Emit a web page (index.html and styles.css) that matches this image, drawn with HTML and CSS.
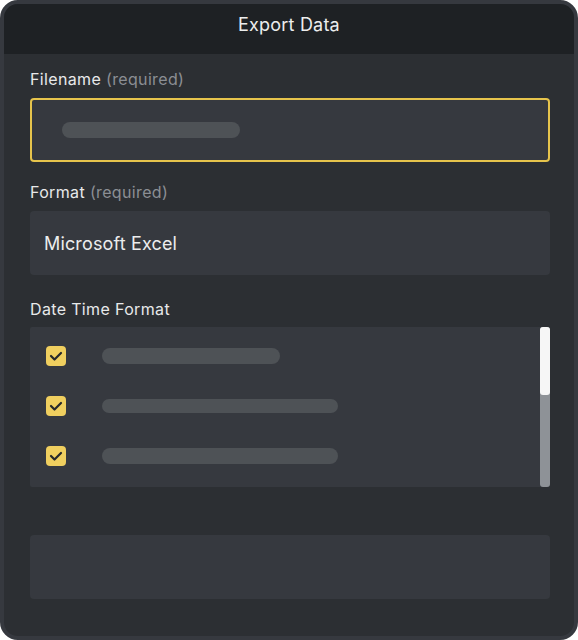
FILE: index.html
```html
<!DOCTYPE html>
<html lang="en">
<head>
<meta charset="utf-8">
<title>Export Data</title>
<link rel="stylesheet" href="styles.css">
</head>
<body>
<div class="frame">
  <div class="header">Export Data</div>
  <div class="content">
    <div class="label label-first">Filename <span class="hint">(required)</span></div>
    <div class="input input-focus"><span class="ph ph-input"></span></div>

    <div class="label">Format <span class="hint">(required)</span></div>
    <div class="input input-value">Microsoft Excel</div>

    <div class="label label-list">Date Time Format</div>
    <div class="list">
      <div class="rows">
        <div class="row">
          <span class="check"><svg viewBox="0 0 20 20" width="20" height="20"><path d="M5 10 L8.5 13.5 L15 7" fill="none" stroke="#25282c" stroke-width="2.2" stroke-linecap="round" stroke-linejoin="round"/></svg></span>
          <span class="ph ph-short"></span>
        </div>
        <div class="row">
          <span class="check"><svg viewBox="0 0 20 20" width="20" height="20"><path d="M5 10 L8.5 13.5 L15 7" fill="none" stroke="#25282c" stroke-width="2.2" stroke-linecap="round" stroke-linejoin="round"/></svg></span>
          <span class="ph ph-long ph-thin"></span>
        </div>
        <div class="row">
          <span class="check"><svg viewBox="0 0 20 20" width="20" height="20"><path d="M5 10 L8.5 13.5 L15 7" fill="none" stroke="#25282c" stroke-width="2.2" stroke-linecap="round" stroke-linejoin="round"/></svg></span>
          <span class="ph ph-long"></span>
        </div>
      </div>
      <div class="scrollbar"><div class="thumb"></div></div>
    </div>

    <div class="input input-empty"></div>
  </div>
</div>
</body>
</html>
```
FILE: styles.css
```css
html, body {
  margin: 0;
  padding: 0;
  background: #ffffff;
}
body {
  font-family: Inter, "Noto Sans", "Liberation Sans", sans-serif;
}
.frame {
  width: 578px;
  height: 640px;
  box-sizing: border-box;
  border: 4px solid #36393f;
  border-radius: 18px;
  overflow: hidden;
  background: #2c2f33;
  display: flex;
  flex-direction: column;
}
.header {
  height: 50px;
  box-sizing: border-box;
  padding-bottom: 9px;
  flex: none;
  background: #1e2124;
  color: #eceded;
  font-size: 18px;
  letter-spacing: 0.2px;
  display: flex;
  align-items: center;
  justify-content: center;
}
.content {
  padding: 0 24px 0 26px;
  display: flex;
  flex-direction: column;
}
.label {
  height: 20px;
  line-height: 20px;
  font-size: 16px;
  letter-spacing: 0.35px;
  color: #e8e9ea;
  margin-top: 20px;
  margin-bottom: 9px;
}
.label-first {
  margin-top: 15px;
}
.label-list {
  margin-top: 24px;
  margin-bottom: 8px;
}
.hint {
  color: #8b8e93;
}
.input {
  height: 64px;
  box-sizing: border-box;
  background: #36393f;
  border-radius: 4px;
  display: flex;
  align-items: center;
}
.input-focus {
  border: 2px solid #e6c44c;
  padding-left: 30px;
}
.input-value {
  padding-left: 14px;
  font-size: 18px;
  letter-spacing: 0.15px;
  color: #eceded;
}
.input-empty {
  margin-top: 48px;
}
.ph {
  display: block;
  height: 16px;
  border-radius: 8px;
  background: #4e5256;
}
.ph-input {
  width: 178px;
}
.ph-short {
  width: 178px;
}
.ph-long {
  width: 236px;
}
.ph-thin {
  height: 14px;
  border-radius: 7px;
}
.list {
  height: 160px;
  background: #36393f;
  border-radius: 2px;
  display: flex;
}
.rows {
  flex: 1;
  padding-top: 4px;
}
.row {
  height: 50px;
  display: flex;
  align-items: center;
  padding-left: 16px;
}
.check {
  width: 20px;
  height: 20px;
  border-radius: 4px;
  background: #f0cf5f;
  display: block;
  margin-right: 36px;
  flex: none;
}
.check svg {
  display: block;
}
.scrollbar {
  width: 10px;
  flex: none;
  background: #8e9297;
  border-radius: 3px;
}
.thumb {
  height: 68px;
  background: #f6f6f6;
  border-radius: 3px;
}
```
